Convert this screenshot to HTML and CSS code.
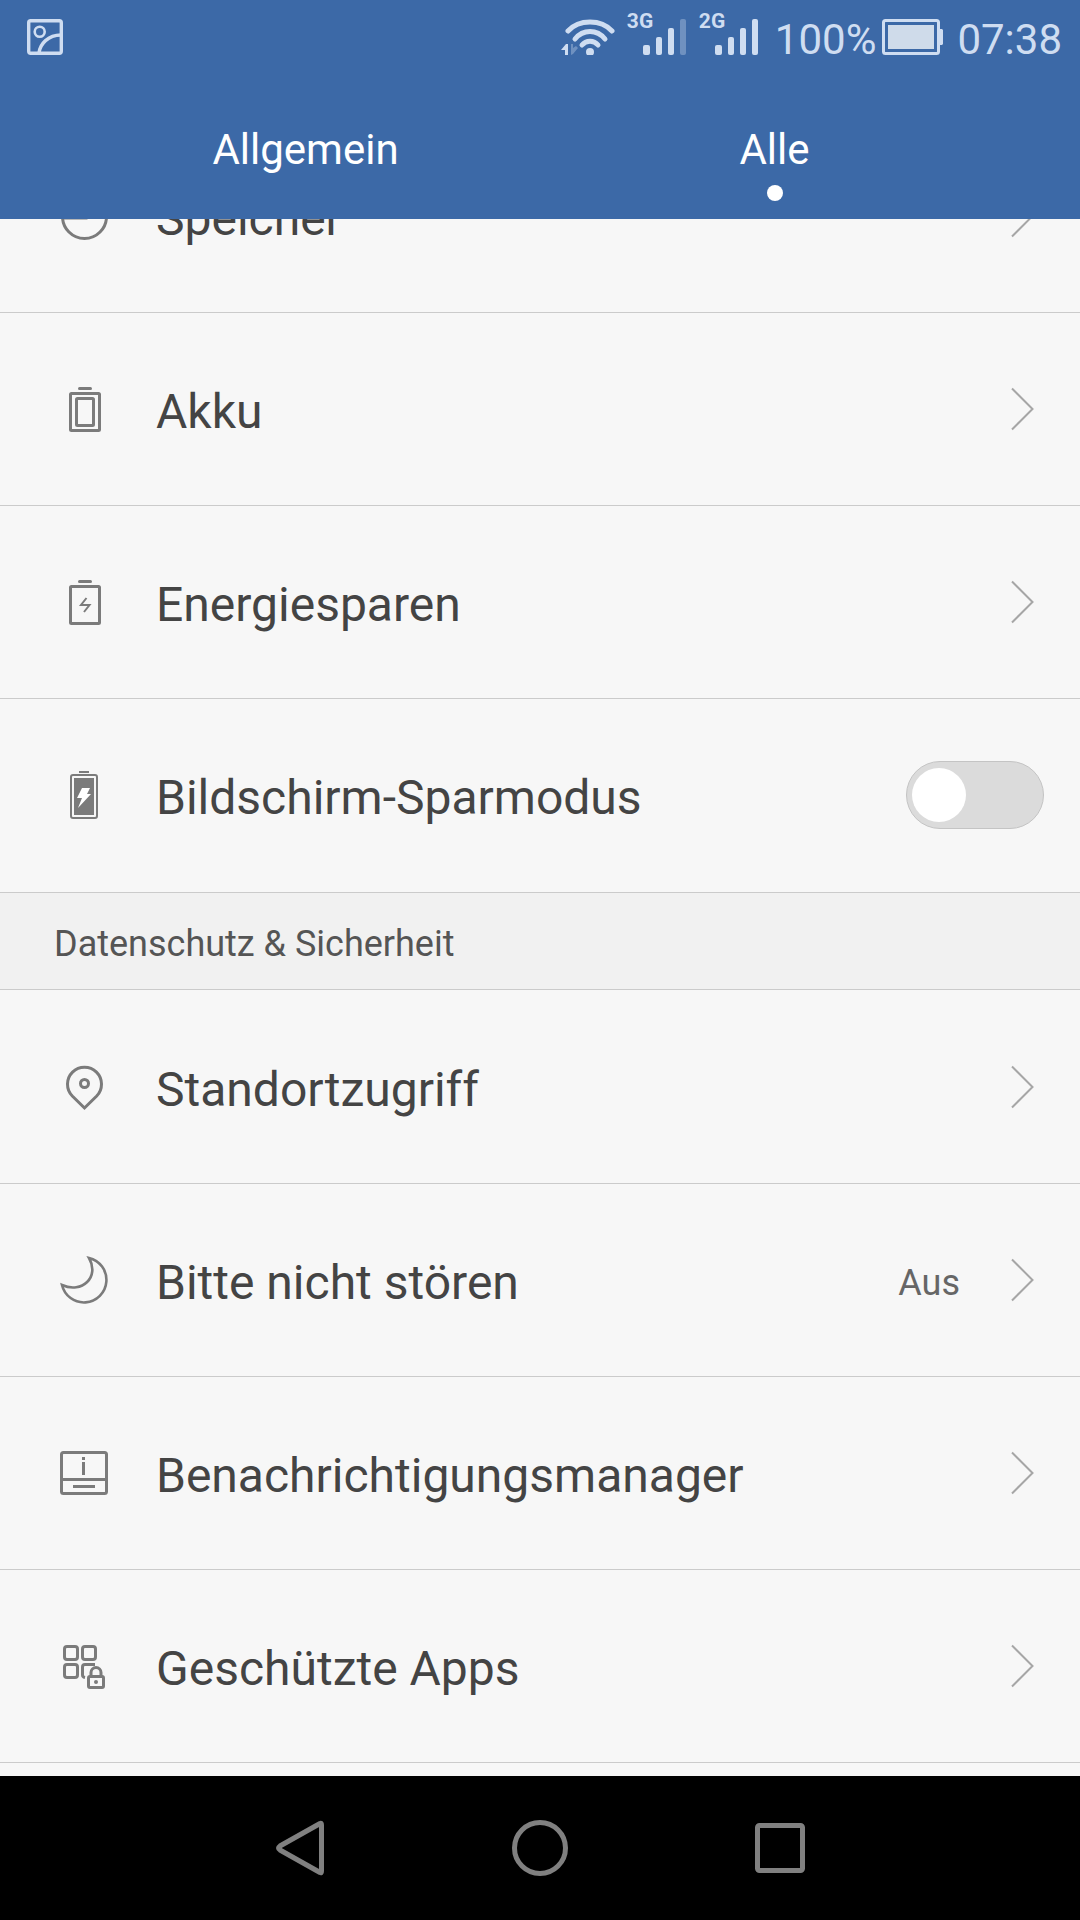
FILE: index.html
```
<!DOCTYPE html>
<html lang="de">
<head>
<meta charset="utf-8">
<meta name="viewport" content="width=device-width, initial-scale=1">
<title>Einstellungen</title>
<link rel="stylesheet" href="styles.css">
</head>
<body>
<svg class="defs" aria-hidden="true">
  <symbol id="chevron" viewBox="0 0 42 48"><path d="M10 3.5L30.5 24L10 44.5" fill="none" stroke="#a6a6a6" stroke-width="2"/></symbol>
</svg>

<header class="header">
  <div class="status">
    <svg class="status-picture" viewBox="0 0 36 36" aria-hidden="true">
      <g fill="none" stroke="currentColor" stroke-width="3.4">
        <rect x="1.7" y="1.7" width="32.6" height="32.6" rx="2"/>
        <circle cx="12.7" cy="12.7" r="5" stroke-width="2.6"/>
        <path d="M12 34C13 25 21 16 34 16"/>
      </g>
    </svg>
    <div class="status-right">
      <svg class="wifi" viewBox="0 0 54 36" aria-hidden="true">
        <g fill="none" stroke="currentColor" stroke-width="5" stroke-linecap="round">
          <path d="M7 12C18 0 40 0 51 12"/>
          <path d="M14 20C22 10 36 10 44 20"/>
          <path d="M21 26C25 21 33 21 37 26"/>
        </g>
        <circle cx="29" cy="33" r="4" fill="currentColor"/>
        <path d="M0 31L5 25H7V36H4V31Z" fill="currentColor"/>
        <path d="M10 25H12V29L15 27L17 29L12 35L10 36Z" fill="currentColor" opacity=".35"/>
      </svg>
      <div class="signal">
        <span class="signal-type">3G</span>
        <svg viewBox="0 0 44 36" aria-hidden="true" fill="currentColor">
          <rect x="0" y="26" width="7" height="10" rx="2"/>
          <rect x="13" y="18" width="6" height="18" rx="2"/>
          <rect x="25" y="9" width="6" height="27" rx="2"/>
          <rect x="37" y="0" width="6" height="36" rx="2" opacity=".35"/>
        </svg>
      </div>
      <div class="signal">
        <span class="signal-type">2G</span>
        <svg viewBox="0 0 44 36" aria-hidden="true" fill="currentColor">
          <rect x="0" y="26" width="7" height="10" rx="2"/>
          <rect x="13" y="18" width="6" height="18" rx="2"/>
          <rect x="25" y="9" width="6" height="27" rx="2"/>
          <rect x="37" y="0" width="6" height="36" rx="2"/>
        </svg>
      </div>
      <div class="power">
        <span>100%</span>
        <svg class="battery" viewBox="0 0 61 36" aria-hidden="true">
          <rect x="1.5" y="1.5" width="55" height="33" rx="2" fill="none" stroke="currentColor" stroke-width="3"/>
          <rect x="6" y="6" width="46" height="24" fill="#cfdbea"/>
          <path d="M57 10H60L61 11V25L60 26H57Z" fill="currentColor"/>
        </svg>
      </div>
      <time>07:38</time>
    </div>
  </div>
  <nav class="tabs">
    <button type="button" class="tab">Allgemein</button>
    <button type="button" class="tab tab-active">Alle</button>
  </nav>
</header>

<main class="viewport">
  <div class="scrolled">
    <div class="list list-device">
      <a class="row" href="#speicher">
        <svg class="icon" viewBox="0 0 48 48" aria-hidden="true"><circle cx="24.5" cy="24.5" r="22"/><path d="M3 26H26V3"/></svg>
        <span class="label">Speicher</span>
        <svg class="chevron" aria-hidden="true"><use href="#chevron"/></svg>
      </a>
      <a class="row" href="#akku">
        <svg class="icon" viewBox="0 0 48 48" aria-hidden="true"><rect x="10.5" y="8.5" width="29" height="37" rx="1"/><rect x="16.5" y="13.5" width="17" height="27" rx="1"/><path d="M19.5 3.5H30.5" stroke-linecap="round"/></svg>
        <span class="label">Akku</span>
        <svg class="chevron" aria-hidden="true"><use href="#chevron"/></svg>
      </a>
      <a class="row" href="#energiesparen">
        <svg class="icon" viewBox="0 0 48 48" aria-hidden="true"><rect x="10.5" y="8.5" width="29" height="37" rx="1"/><path d="M19.5 3.5H30.5" stroke-linecap="round"/><path d="M26.5 20L21 27H29.5L24 34" stroke-width="2"/></svg>
        <span class="label">Energiesparen</span>
        <svg class="chevron" aria-hidden="true"><use href="#chevron"/></svg>
      </a>
      <label class="row">
        <svg class="icon" viewBox="0 0 48 48" aria-hidden="true"><rect x="11" y="4" width="26" height="43" rx="2" stroke-width="2"/><path d="M19 1H29" stroke-width="2"/><rect x="14" y="7" width="20" height="37" fill="#7b7b7b" stroke="none"/><path d="M22 17H30L27 23H31L18 37L22 27H17Z" fill="#fff" stroke="none"/></svg>
        <span class="label">Bildschirm-Sparmodus</span>
        <input class="toggle" type="checkbox" role="switch">
      </label>
    </div>
    <h2 class="section-title">Datenschutz &amp; Sicherheit</h2>
    <div class="list list-privacy">
      <a class="row" href="#standort">
        <svg class="icon" viewBox="0 0 48 48" aria-hidden="true"><path d="M24.5 45L12.3 33A17 17 0 1 1 36.7 33Z"/><circle cx="24.5" cy="20.5" r="4"/></svg>
        <span class="label">Standortzugriff</span>
        <svg class="chevron" aria-hidden="true"><use href="#chevron"/></svg>
      </a>
      <a class="row" href="#nicht-stoeren">
        <svg class="icon" viewBox="0 0 48 48" aria-hidden="true"><path d="M29 2A22.5 22.5 0 1 1 2 29C22 38 40 21 29 2Z" stroke-width="2.6"/></svg>
        <span class="label">Bitte nicht stören</span>
        <span class="value">Aus</span>
        <svg class="chevron" aria-hidden="true"><use href="#chevron"/></svg>
      </a>
      <a class="row" href="#benachrichtigungen">
        <svg class="icon" viewBox="0 0 48 48" aria-hidden="true"><rect x="1.5" y="3.5" width="45" height="41" rx="2"/><path d="M1 30.5H47M13 37.5H35M23.5 8V11M23.5 13V26"/></svg>
        <span class="label">Benachrichtigungsmanager</span>
        <svg class="chevron" aria-hidden="true"><use href="#chevron"/></svg>
      </a>
      <a class="row" href="#geschuetzte-apps">
        <svg class="icon" viewBox="0 0 48 48" aria-hidden="true"><rect x="4.5" y="4.5" width="13" height="13" rx="2.5"/><rect x="22.5" y="4.5" width="13" height="13" rx="2.5"/><rect x="4.5" y="22.5" width="13" height="13" rx="2.5"/><path d="M35 22.5H25Q22.5 22.5 22.5 25V33Q22.5 35 25 35.5"/><rect x="28.5" y="34.5" width="15" height="11" rx="1.5"/><path d="M31 34V30.5A5 5 0 0 1 41 30.5V34"/><circle cx="36" cy="40" r="2" fill="#7b7b7b" stroke="none"/></svg>
        <span class="label">Geschützte Apps</span>
        <svg class="chevron" aria-hidden="true"><use href="#chevron"/></svg>
      </a>
    </div>
  </div>
</main>

<nav class="navbar">
  <button type="button" aria-label="Zurück"><svg viewBox="0 0 60 60" aria-hidden="true"><path d="M50 5.5Q51.5 4.5 51.5 7V53Q51.5 55.5 50 54.5L10 32Q7 30 10 28Z"/></svg></button>
  <button type="button" aria-label="Startseite"><svg viewBox="0 0 60 60" aria-hidden="true"><circle cx="30" cy="30" r="25.5"/></svg></button>
  <button type="button" aria-label="Übersicht"><svg viewBox="0 0 60 60" aria-hidden="true"><rect x="7.5" y="7.5" width="45" height="45" rx="2"/></svg></button>
</nav>
</body>
</html>
```
FILE: styles.css
```
* {
  box-sizing: border-box;
}

body {
  margin: 0;
  height: 100vh;
  display: flex;
  flex-direction: column;
  background: #f7f7f7;
  color: #444;
  font-family: Roboto, "Noto Sans", sans-serif;
}

button {
  padding: 0;
  border: 0;
  background: none;
  color: inherit;
  font: inherit;
}

svg {
  display: block;
  flex: none;
}

.defs {
  position: absolute;
  width: 0;
  height: 0;
}

.header {
  flex: none;
  background: #3c69a7;
  color: #fff;
}

/* Status bar */
.status {
  height: 74px;
  padding: 0 18px 0 27px;
  display: flex;
  align-items: center;
  justify-content: space-between;
  color: #cfddf1;
  font-size: 42px;
  line-height: 48px;
}

.status-picture {
  width: 36px;
  height: 36px;
}

.status-right {
  display: flex;
  align-items: center;
  gap: 12px;
}

.wifi {
  width: 54px;
  height: 36px;
}

.signal {
  display: grid;
  justify-items: end;
  width: 60px;
}

.signal > * {
  grid-area: 1 / 1;
}

.signal svg {
  width: 44px;
  height: 36px;
}

.signal-type {
  justify-self: start;
  margin-top: -10px;
  font-size: 21px;
  font-weight: 700;
  line-height: 24px;
}

.power {
  display: flex;
  align-items: center;
  gap: 6px;
  padding: 0 2px 0 4px;
}

.power span,
.status time {
  padding-top: 6px;
}

.battery {
  width: 61px;
  height: 36px;
}

/* Tabs */
.tabs {
  height: 145px;
  padding: 0 71px;
  display: flex;
}

.tab {
  flex: 1;
  display: flex;
  flex-direction: column;
  align-items: center;
  padding-top: 51px;
  font-size: 42px;
  line-height: 50px;
}

.tab-active::after {
  content: "";
  width: 16px;
  height: 16px;
  margin-top: 10px;
  border-radius: 50%;
  background: #fff;
}

/* Settings list */
.viewport {
  flex: 1;
  min-height: 0;
  overflow: hidden;
}

.scrolled {
  margin-top: -99px;
}

.row {
  min-height: 193px;
  padding: 0 36px 0 60px;
  display: flex;
  align-items: center;
  border-bottom: 1px solid #cbcbcb;
  color: inherit;
  text-decoration: none;
}

.list-device .row:last-child {
  border-bottom-color: transparent;
}

.list-privacy {
  padding-top: 1px;
}

.icon {
  width: 48px;
  height: 48px;
  fill: none;
  stroke: #7b7b7b;
  stroke-width: 3;
}

.label {
  flex: 1;
  padding: 6px 0 0 48px;
  font-size: 48px;
  line-height: 56px;
}

.value {
  padding-top: 6px;
  margin-right: 42px;
  color: #666;
  font-size: 36px;
  line-height: 44px;
}

.chevron {
  width: 42px;
  height: 48px;
}

.toggle {
  appearance: none;
  width: 138px;
  height: 68px;
  margin: 0;
  padding: 0 5px;
  display: flex;
  align-items: center;
  border: 1px solid #c4c4c4;
  border-radius: 34px;
  background: #dbdbdb;
}

.toggle::before {
  content: "";
  width: 54px;
  height: 54px;
  border-radius: 50%;
  background: #fff;
}

.toggle:checked {
  justify-content: flex-end;
  background: #3c69a7;
}

.section-title {
  min-height: 98px;
  margin: 0;
  padding: 6px 54px 0;
  display: flex;
  align-items: center;
  border: solid #cbcbcb;
  border-width: 1px 0;
  background: #f1f1f1;
  color: #555;
  font-size: 36px;
  font-weight: 400;
  line-height: 44px;
}

/* System navigation */
.navbar {
  flex: none;
  height: 144px;
  display: flex;
  justify-content: center;
  background: #000;
}

.navbar button {
  width: 240px;
  display: flex;
  align-items: center;
  justify-content: center;
}

.navbar svg {
  width: 60px;
  height: 60px;
  fill: none;
  stroke: #808080;
  stroke-width: 5;
}
```
